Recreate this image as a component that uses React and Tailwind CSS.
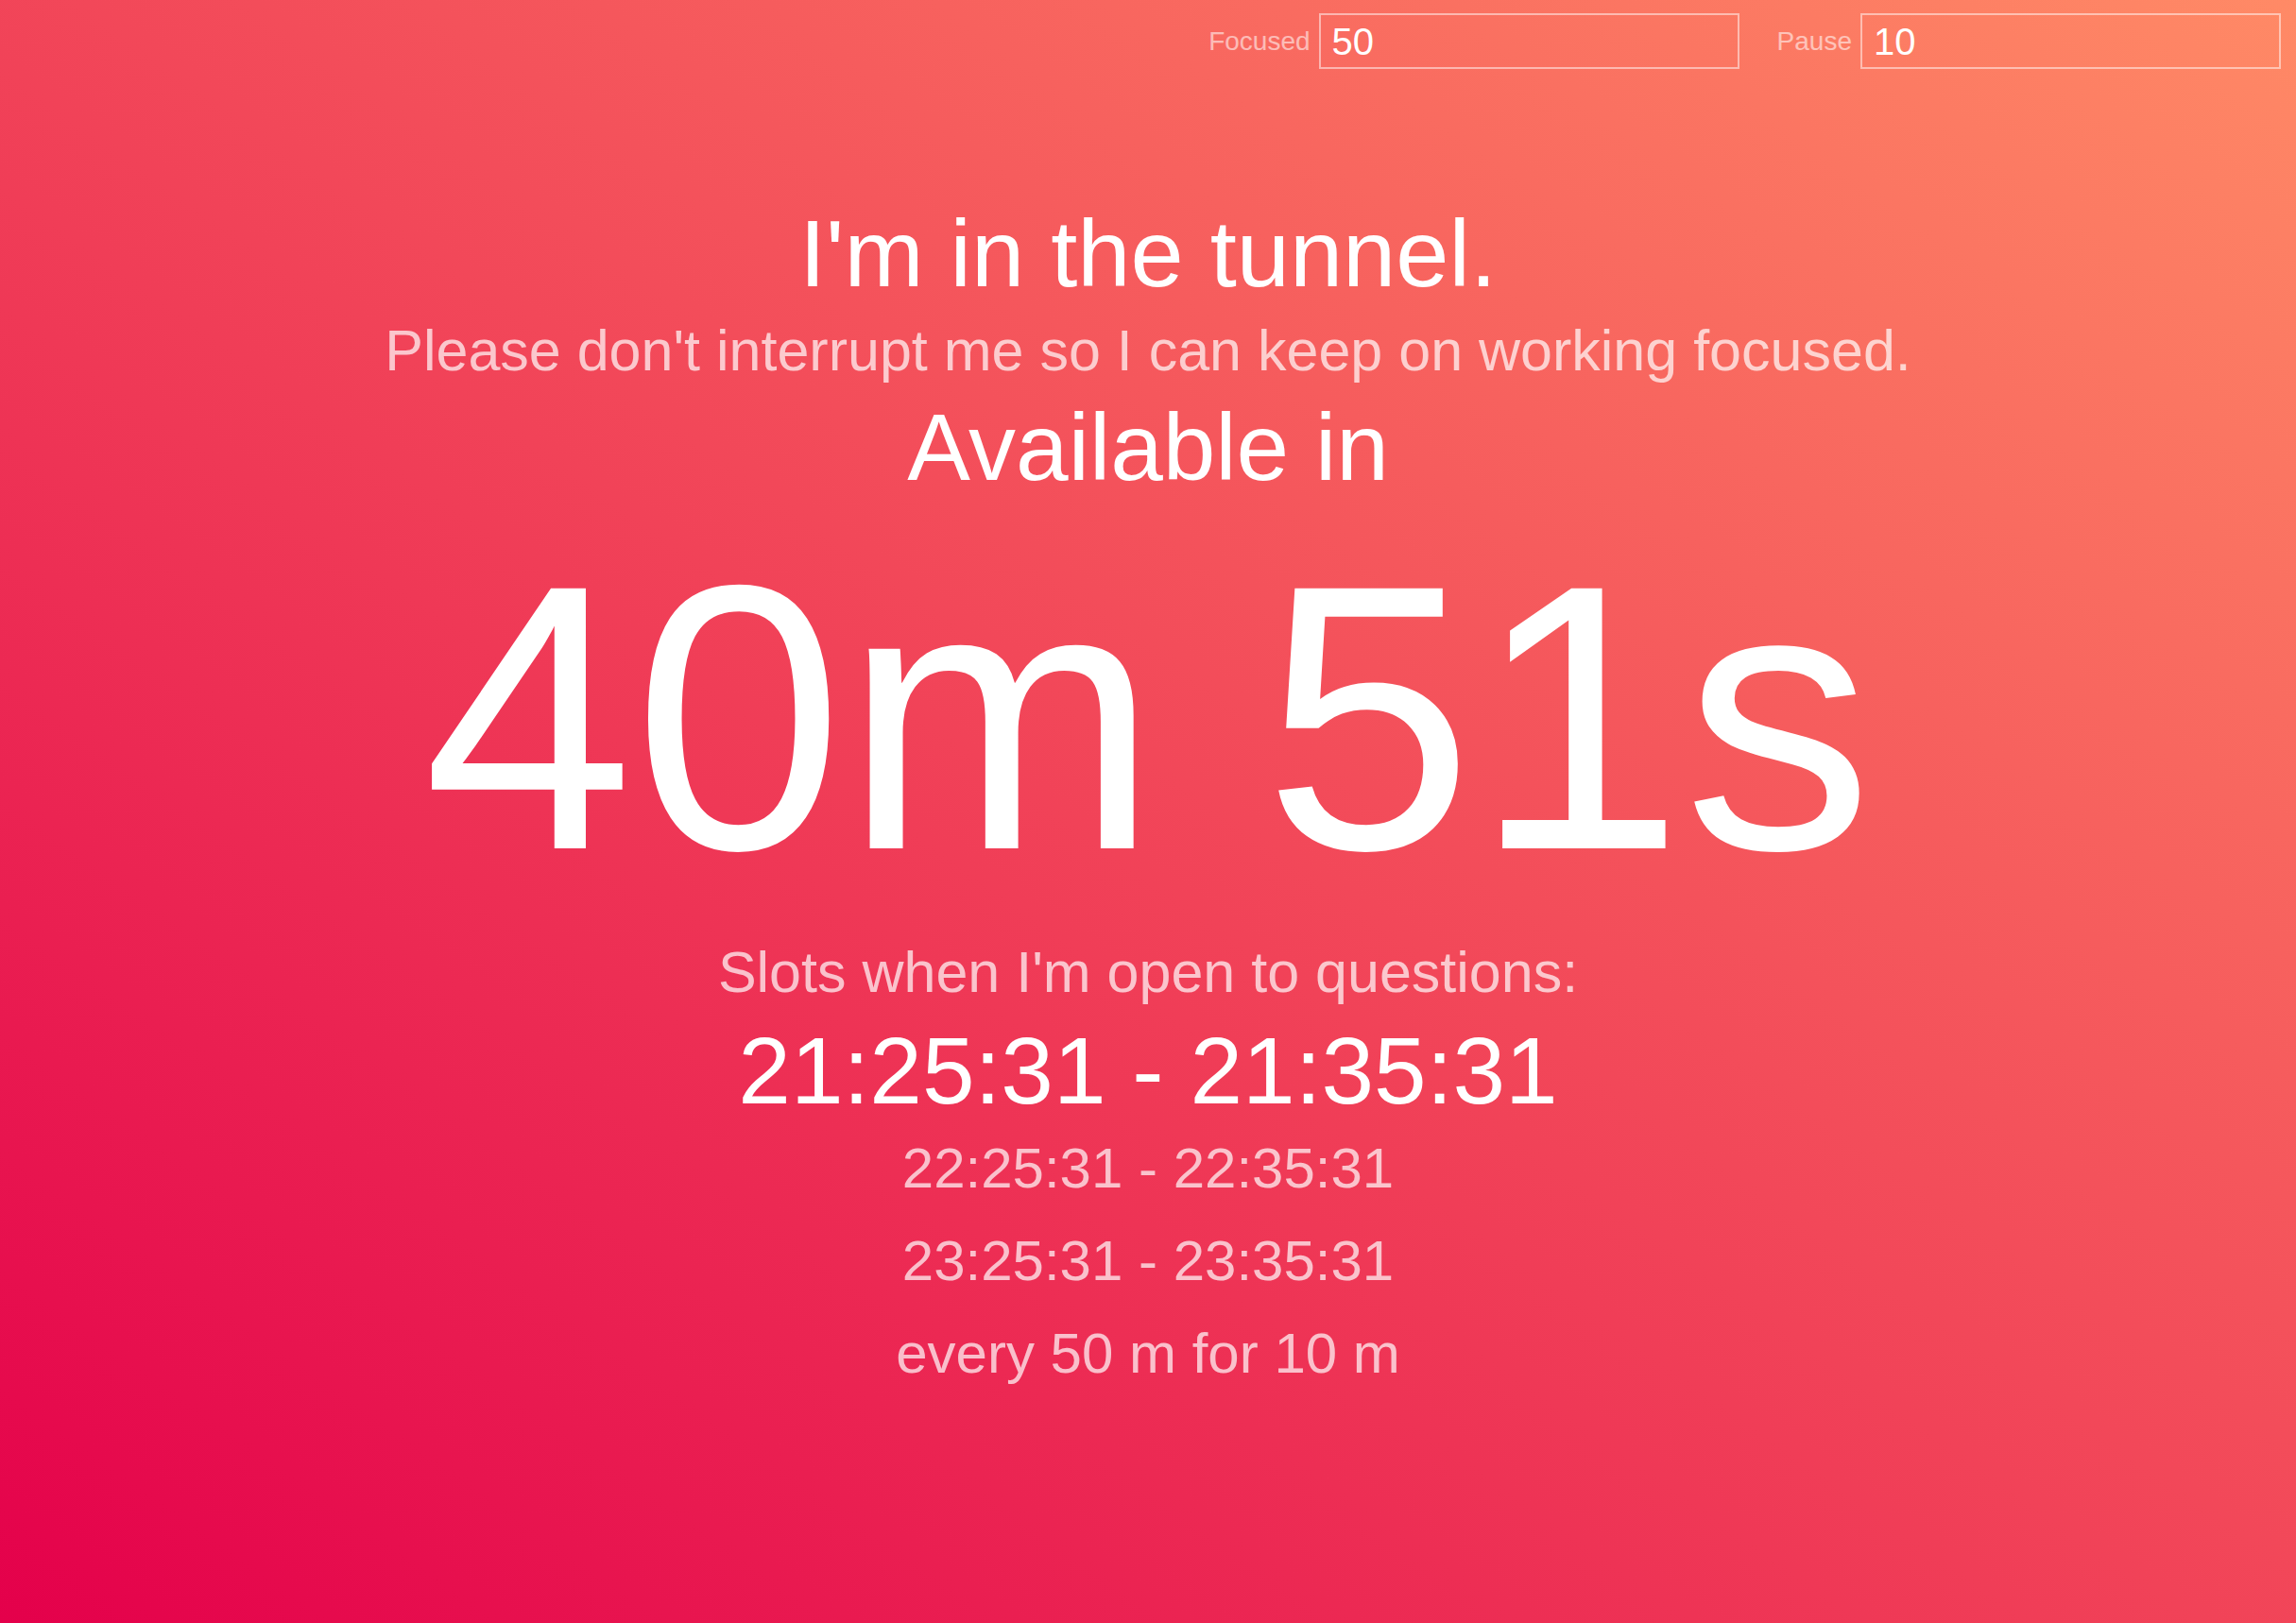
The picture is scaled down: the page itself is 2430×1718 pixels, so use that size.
import React, { useState } from 'react';

// Slots are fixed so the page always shows the same times
const SLOTS = [
    '21:25:31 - 21:35:31',
    '22:25:31 - 22:35:31',
    '23:25:31 - 23:35:31',
];

const Campo = ({ etiqueta, valor, onChange }) => (
    <label className="flex items-center">
        <span className="mr-[9px] text-[28px] leading-[28px] text-white/55">{etiqueta}</span>
        <input
            type="text"
            value={valor}
            onChange={e => onChange(e.target.value)}
            className="w-[445px] h-[59px] border-2 border-white/50 bg-transparent px-[12px] text-[40px] text-white outline-none"
        />
    </label>
);

const App = () => {

    const [ focused, setFocused ] = useState('50');
    const [ pause, setPause ] = useState('10');

    return (
        <div
            className="min-h-screen w-full bg-[linear-gradient(to_top_right,#e4004b,#ff8a66)] text-white"
            style={{ fontFamily: '"Liberation Sans", Arial, Helvetica, sans-serif' }}
        >
            <div className="flex justify-end gap-[40px] pt-[14px] pr-[16px]">
                <Campo etiqueta="Focused" valor={focused} onChange={setFocused} />
                <Campo etiqueta="Pause" valor={pause} onChange={setPause} />
            </div>

            <div className="flex flex-col items-center text-center">
                <h1 className="mt-[145px] text-[101px] leading-[100px]">I'm in the tunnel.</h1>
                <p className="mt-[23px] text-[61px] leading-[60px] text-white/70">
                    Please don't interrupt me so I can keep on working focused.
                </p>
                <h2 className="mt-[22px] text-[100px] leading-[100px]">Available in</h2>
                <div className="mt-[37px] text-[400px] leading-[400px]">40m 51s</div>

                <p className="mt-[39px] text-[61px] leading-[60px] text-white/70">Slots when I'm open to questions:</p>
                <div className="mt-[24px] text-[100px] leading-[100px]">{SLOTS[0]}</div>
                <div className="mt-[24px] text-[60px] leading-[60px] text-white/70">{SLOTS[1]}</div>
                <div className="mt-[38px] text-[60px] leading-[60px] text-white/70">{SLOTS[2]}</div>
                <div className="mt-[38px] text-[60px] leading-[60px] text-white/70">
                    every {focused} m for {pause} m
                </div>
            </div>
        </div>
    );
}

export default App;
